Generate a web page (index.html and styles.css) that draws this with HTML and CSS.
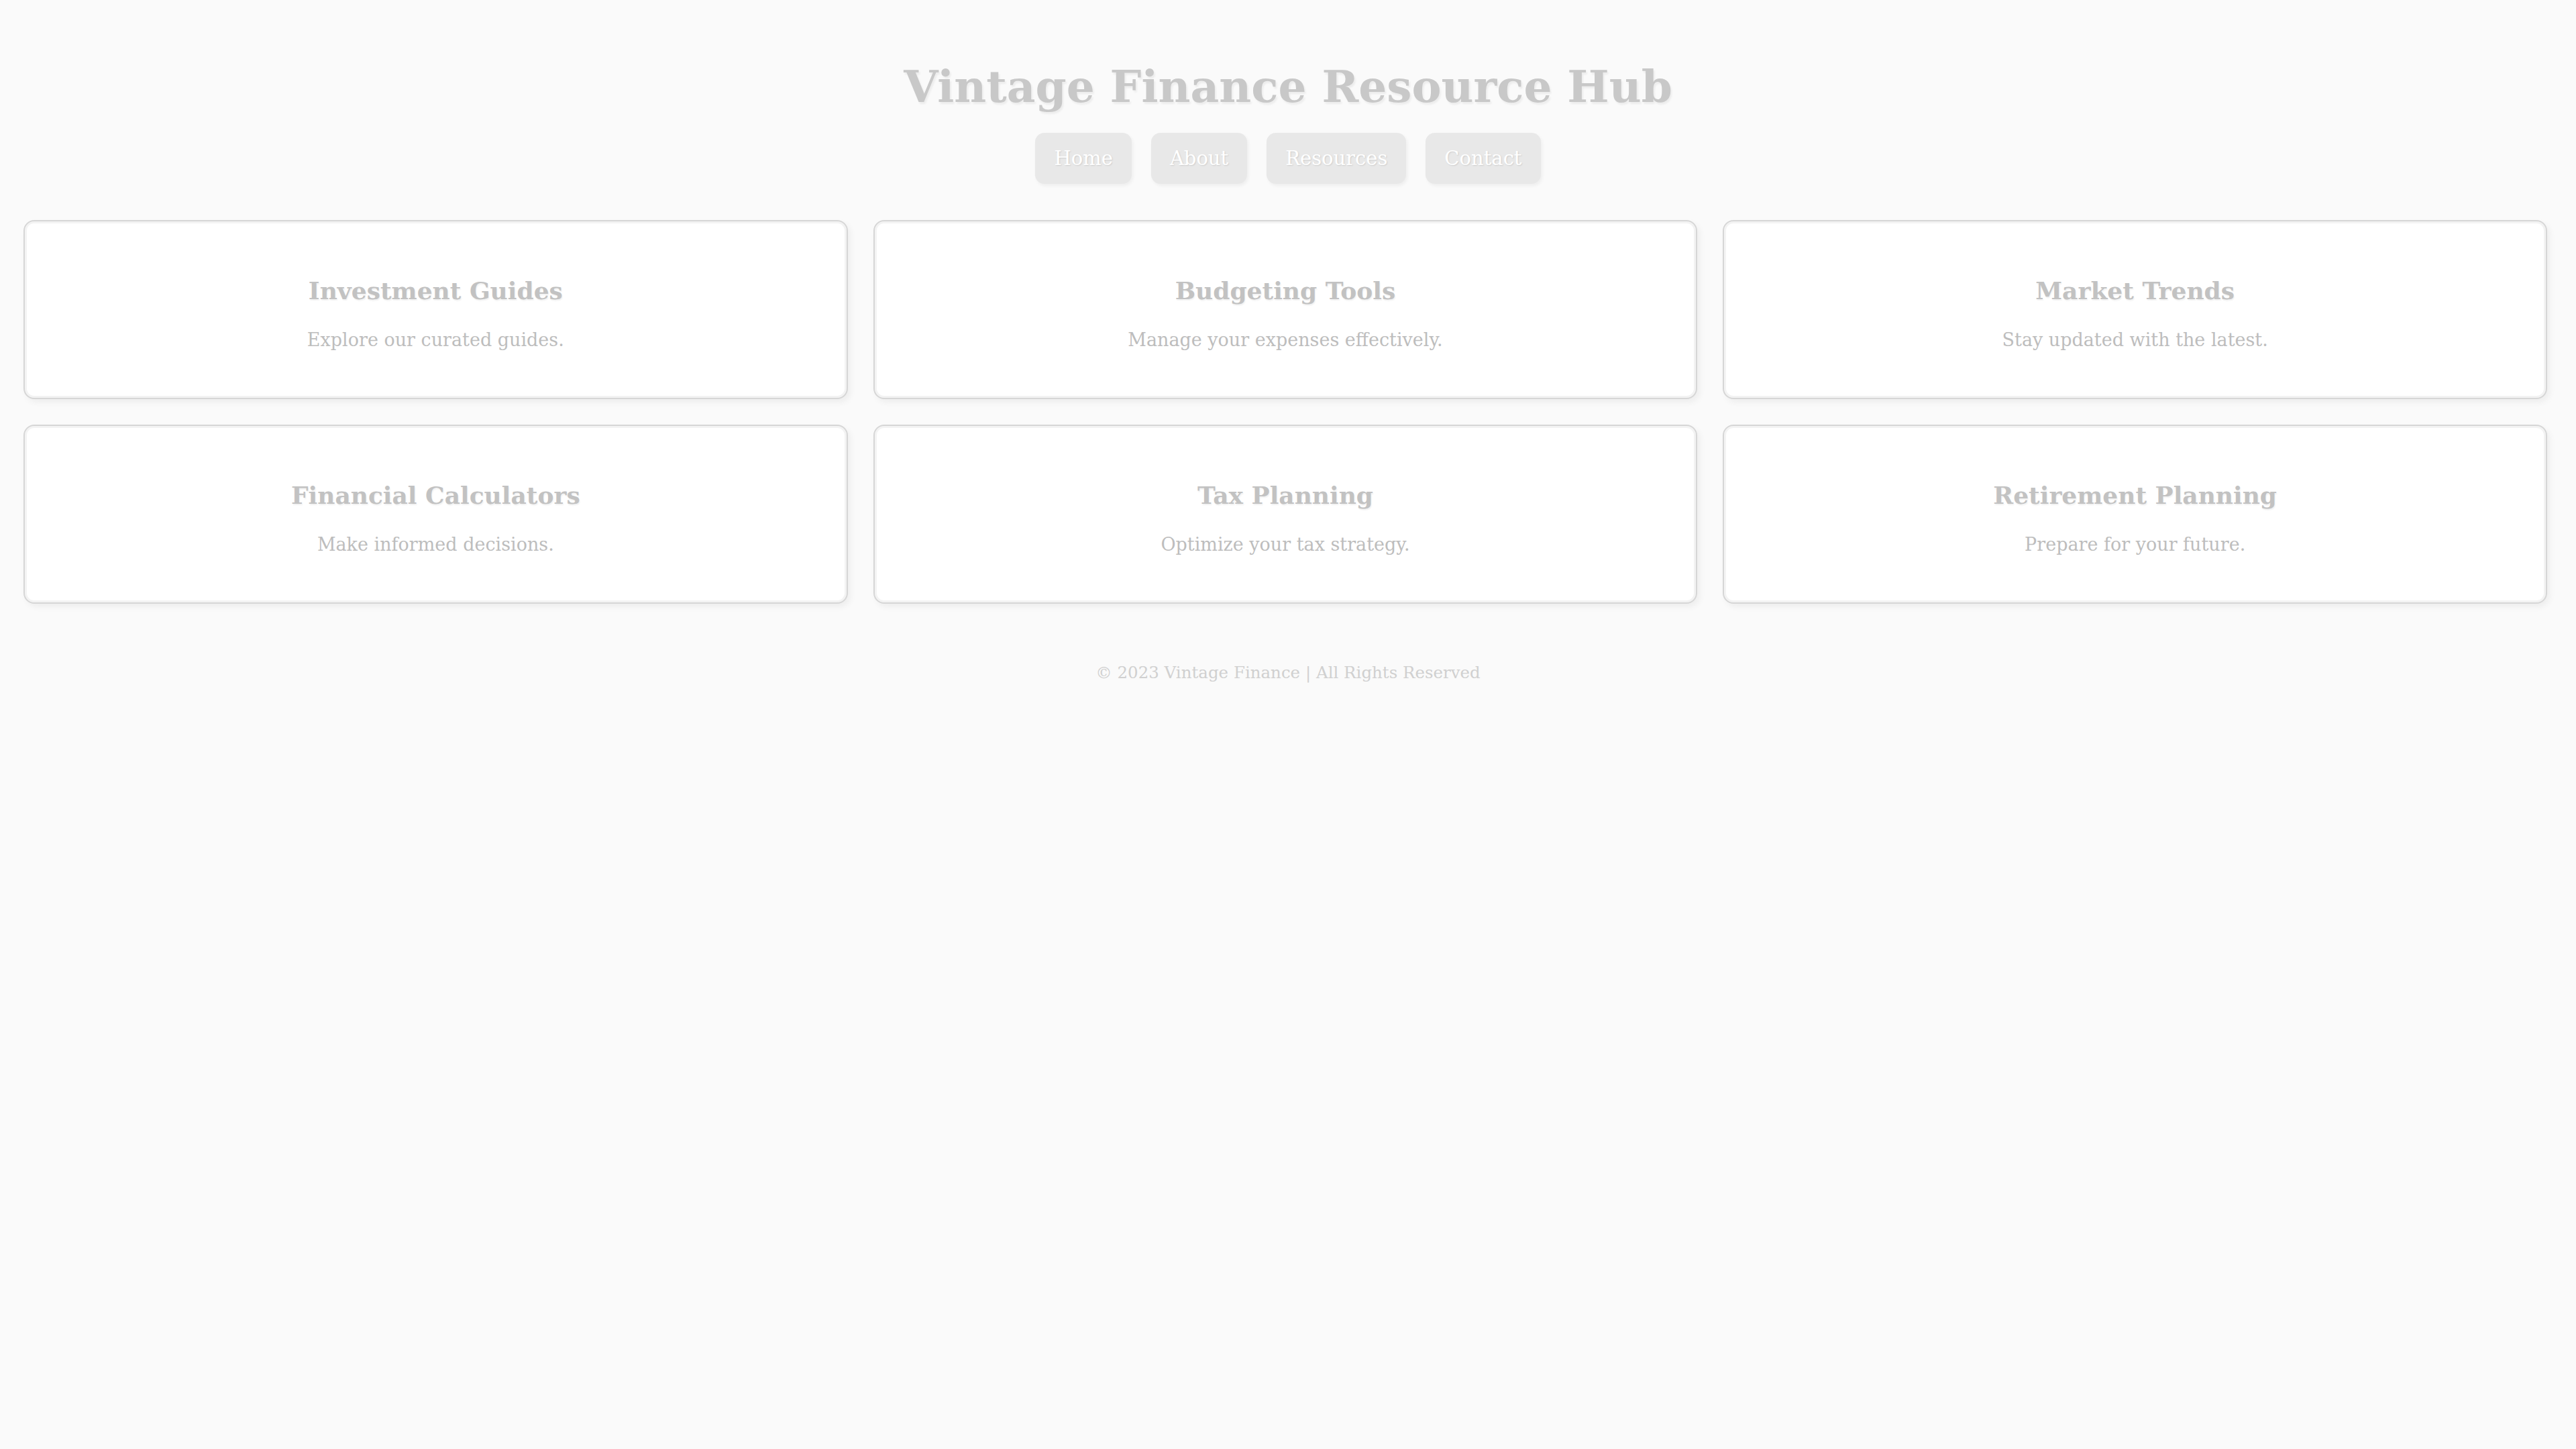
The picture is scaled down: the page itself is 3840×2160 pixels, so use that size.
FILE: index.html
```html
<!DOCTYPE html>
<html lang="en">
<head>
<meta charset="utf-8">
<title>Vintage Finance Resource Hub</title>
<link rel="stylesheet" href="styles.css">
</head>
<body>
<header class="site-header">
  <h1 class="site-title">Vintage Finance Resource Hub</h1>
  <nav class="site-nav">
    <a class="nav-btn" href="#">Home</a>
    <a class="nav-btn" href="#">About</a>
    <a class="nav-btn" href="#">Resources</a>
    <a class="nav-btn" href="#">Contact</a>
  </nav>
</header>
<main class="card-grid">
  <section class="card">
    <h2 class="card-title">Investment Guides</h2>
    <p class="card-text">Explore our curated guides.</p>
  </section>
  <section class="card">
    <h2 class="card-title">Budgeting Tools</h2>
    <p class="card-text">Manage your expenses effectively.</p>
  </section>
  <section class="card">
    <h2 class="card-title">Market Trends</h2>
    <p class="card-text">Stay updated with the latest.</p>
  </section>
  <section class="card">
    <h2 class="card-title">Financial Calculators</h2>
    <p class="card-text">Make informed decisions.</p>
  </section>
  <section class="card">
    <h2 class="card-title">Tax Planning</h2>
    <p class="card-text">Optimize your tax strategy.</p>
  </section>
  <section class="card">
    <h2 class="card-title">Retirement Planning</h2>
    <p class="card-text">Prepare for your future.</p>
  </section>
</main>
<footer class="site-footer">© 2023 Vintage Finance | All Rights Reserved</footer>
</body>
</html>
```

FILE: styles.css
```css
html, body {
  margin: 0;
  padding: 0;
}

body {
  background: #fafafa;
  font-family: "DejaVu Serif", "Liberation Serif", serif;
  color: #c4c4c4;
  min-height: 2160px;
}

.site-header {
  display: flex;
  flex-direction: column;
  align-items: center;
  padding-top: 96px;
}

.site-title {
  margin: 0;
  font-size: 66px;
  line-height: 1;
  font-weight: 700;
  color: #c8c8c8;
  text-shadow: 2px 3px 3px rgba(0, 0, 0, 0.06);
}

.site-nav {
  display: flex;
  gap: 29px;
  margin-top: 36px;
}

.nav-btn {
  display: block;
  padding: 20px 28px;
  font-size: 29px;
  line-height: 36px;
  color: #ffffff;
  text-decoration: none;
  background: #e8e8e8;
  border-radius: 14px;
  text-shadow: 1px 1px 2px rgba(0, 0, 0, 0.12);
  box-shadow: 2px 3px 5px rgba(0, 0, 0, 0.05);
}

.card-grid {
  display: grid;
  grid-template-columns: repeat(3, 1fr);
  gap: 38px;
  margin-top: 54px;
  padding: 0 43px 0 35px;
}

.card {
  background: #ffffff;
  border: 2px solid #d6d6d6;
  border-radius: 16px;
  box-shadow: inset 0 0 0 3px #f3f3f3, 4px 5px 10px rgba(0, 0, 0, 0.05);
  padding: 85px 20px 73px;
  text-align: center;
}

.card-title {
  margin: 0;
  font-size: 36px;
  line-height: 1;
  font-weight: 700;
  color: #c2c2c2;
  text-shadow: 1px 2px 2px rgba(0, 0, 0, 0.06);
}

.card-text {
  margin: 42px 0 0;
  font-size: 27px;
  line-height: 1;
  color: #bdbdbd;
}

.site-footer {
  margin-top: 91px;
  text-align: center;
  font-size: 24.5px;
  line-height: 1;
  color: #d0d0d0;
}
```
